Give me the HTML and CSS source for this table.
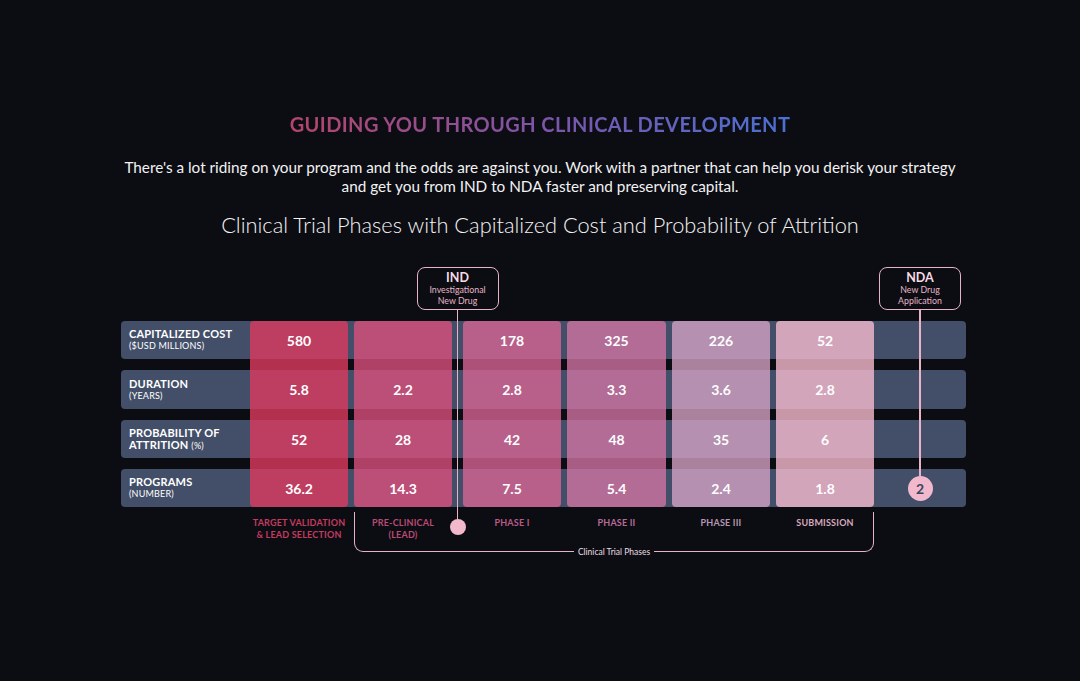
FILE: index.html
```html
<!DOCTYPE html>
<html lang="en">
<head>
<meta charset="utf-8">
<title>Clinical Development</title>
<link rel="stylesheet" href="styles.css">
</head>
<body>
<main class="page">
  <h1 class="title">GUIDING YOU THROUGH CLINICAL DEVELOPMENT</h1>
  <p class="intro">There's a lot riding on your program and the odds are against you. Work with a partner that can help you derisk your strategy<br>and get you from IND to NDA faster and preserving capital.</p>
  <h2 class="subtitle">Clinical Trial Phases with Capitalized Cost and Probability of Attrition</h2>

  <div class="chart">
    <div class="callout callout-ind"><strong>IND</strong><span>Investigational<br>New Drug</span></div>
    <div class="callout callout-nda"><strong>NDA</strong><span>New Drug<br>Application</span></div>

    <div class="bar r1"></div>
    <div class="bar r2"></div>
    <div class="bar r3"></div>
    <div class="bar r4"></div>

    <div class="col c1"></div>
    <div class="col c2"></div>
    <div class="col c3"></div>
    <div class="col c4"></div>
    <div class="col c5"></div>
    <div class="col c6"></div>

    <div class="rowlabel r1"><b>CAPITALIZED COST</b><small>($USD MILLIONS)</small></div>
    <div class="rowlabel r2"><b>DURATION</b><small>(YEARS)</small></div>
    <div class="rowlabel r3"><b>PROBABILITY OF</b><b>ATTRITION <small class="inl">(%)</small></b></div>
    <div class="rowlabel r4"><b>PROGRAMS</b><small>(NUMBER)</small></div>

    <div class="val r1 k1">580</div>
    <div class="val r1 k3">178</div>
    <div class="val r1 k4">325</div>
    <div class="val r1 k5">226</div>
    <div class="val r1 k6">52</div>

    <div class="val r2 k1">5.8</div>
    <div class="val r2 k2">2.2</div>
    <div class="val r2 k3">2.8</div>
    <div class="val r2 k4">3.3</div>
    <div class="val r2 k5">3.6</div>
    <div class="val r2 k6">2.8</div>

    <div class="val r3 k1">52</div>
    <div class="val r3 k2">28</div>
    <div class="val r3 k3">42</div>
    <div class="val r3 k4">48</div>
    <div class="val r3 k5">35</div>
    <div class="val r3 k6">6</div>

    <div class="val r4 k1">36.2</div>
    <div class="val r4 k2">14.3</div>
    <div class="val r4 k3">7.5</div>
    <div class="val r4 k4">5.4</div>
    <div class="val r4 k5">2.4</div>
    <div class="val r4 k6">1.8</div>

    <div class="bracket"><span>Clinical Trial Phases</span></div>

    <div class="phase k1 t1">TARGET VALIDATION<br>&amp; LEAD SELECTION</div>
    <div class="phase k2 t2">PRE-CLINICAL<br>(LEAD)</div>
    <div class="phase k3 t3">PHASE I</div>
    <div class="phase k4 t4">PHASE II</div>
    <div class="phase k5 t5">PHASE III</div>
    <div class="phase k6 t6">SUBMISSION</div>

    <div class="conn conn-ind"><i class="stem"></i><i class="dot"></i></div>
    <div class="conn conn-nda"><i class="stem"></i><i class="dot dot-num">2</i></div>
  </div>
</main>
</body>
</html>
```

FILE: styles.css
```css
* { box-sizing: border-box; }
html, body { margin: 0; padding: 0; }
body {
  background: #0c0d12;
  color: #f2f2f4;
  font-family: Lato, "Open Sans", sans-serif;
  width: 1080px;
  height: 681px;
  overflow: hidden;
}
.page {
  padding-top: 112px;
  text-align: center;
}
.title {
  display: inline-block;
  margin: 0;
  font-size: 20px;
  line-height: 24px;
  font-weight: 700;
  letter-spacing: 0.4px;
  background: linear-gradient(90deg, #b4456b 0%, #7d55a8 50%, #4b70d2 100%);
  -webkit-background-clip: text;
  background-clip: text;
  color: transparent;
}
.intro {
  margin: 22px 0 0;
  font-size: 15.3px;
  line-height: 19px;
  font-weight: 400;
  color: #f2f2f4;
}
.subtitle {
  margin: 15px 0 0;
  font-size: 21.8px;
  line-height: 27px;
  font-weight: 300;
  color: #f4f4f6;
}

/* chart grid */
.chart {
  margin: 29px 0 0 121px;
  display: grid;
  grid-template-columns: 129px 98px 6px 98px 11px 98px 6px 99px 6px 98px 6px 98px 92px;
  grid-template-rows: 43px 11px 38px 11px 39px 11px 38px 11px 38px 50px;
  text-align: left;
}
.bar {
  grid-column: 1 / -1;
  background: #434f68;
  border-radius: 4px;
}
.r1 { grid-row: 3; }
.r2 { grid-row: 5; }
.r3 { grid-row: 7; }
.r4 { grid-row: 9; }
.k1 { grid-column: 2; }
.k2 { grid-column: 4; }
.k3 { grid-column: 6; }
.k4 { grid-column: 8; }
.k5 { grid-column: 10; }
.k6 { grid-column: 12; }

.col {
  grid-row: 3 / 10;
  border-radius: 4px;
  opacity: 0.8;
  z-index: 1;
}
.col.c1 { grid-column: 2; background: #dd3a5f; }
.col.c2 { grid-column: 4; background: #d94f7c; }
.col.c3 { grid-column: 6; background: #d66392; }
.col.c4 { grid-column: 8; background: #d073a1; }
.col.c5 { grid-column: 10; background: #d2a0c2; }
.col.c6 { grid-column: 12; background: #f7bace; }

.rowlabel {
  grid-column: 1;
  z-index: 2;
  padding-left: 8px;
  display: flex;
  flex-direction: column;
  justify-content: center;
  color: #ffffff;
  line-height: 12px;
}
.rowlabel b {
  font-size: 11px;
  font-weight: 700;
  letter-spacing: 0.2px;
}
.rowlabel small {
  font-size: 9px;
  font-weight: 400;
  letter-spacing: 0.2px;
}
.rowlabel small.inl { font-size: 9px; }

.val {
  z-index: 2;
  display: flex;
  align-items: center;
  justify-content: center;
  font-size: 14px;
  font-weight: 700;
  color: #ffffff;
}

.phase {
  grid-row: 10;
  z-index: 2;
  padding-top: 10px;
  text-align: center;
  font-size: 9px;
  line-height: 12px;
  font-weight: 700;
  letter-spacing: 0.2px;
}
.t1 { color: #c43b60; }
.t2 { color: #bb4a74; }
.t3 { color: #bb5a87; }
.t4 { color: #b76c97; }
.t5 { color: #b797b5; }
.t6 { color: #d6a9bd; }

.bracket {
  grid-row: 10;
  grid-column: 4 / 13;
  margin-top: 5px;
  height: 40px;
  border: 1.5px solid #e8b3c7;
  border-top: none;
  border-radius: 0 0 9px 9px;
  display: flex;
  justify-content: center;
  align-items: flex-end;
}
.bracket span {
  background: #0c0d12;
  padding: 0 4px;
  font-size: 8.5px;
  line-height: 10px;
  margin-bottom: -5.5px;
  color: #eadde3;
}

.callout {
  grid-row: 1;
  justify-self: center;
  width: 82px;
  height: 43px;
  border: 1.5px solid #e8b3c7;
  border-radius: 8px;
  background: #0c0d12;
  display: flex;
  flex-direction: column;
  align-items: center;
  justify-content: center;
  text-align: center;
  z-index: 3;
}
.callout-ind { grid-column: 4 / 7; }
.callout-nda { grid-column: 13; }
.callout strong {
  font-size: 12.5px;
  line-height: 14px;
  font-weight: 700;
  color: #f6dbe6;
}
.callout span {
  font-size: 8.8px;
  line-height: 10.5px;
  color: #e6b6c8;
}

.conn {
  z-index: 3;
  display: flex;
  flex-direction: column;
  align-items: center;
  justify-self: center;
}
.conn-ind { grid-column: 5; grid-row: 2 / 11; }
.conn-nda { grid-column: 13; grid-row: 2 / 10; }
.stem {
  display: block;
  width: 1.5px;
  background: #e8b3c7;
}
.conn-ind .stem { height: 209px; }
.conn-nda .stem { flex: 1; }
.dot {
  display: block;
  width: 16px;
  height: 16px;
  border-radius: 50%;
  background: #f2b9cd;
  flex: none;
}
.dot-num {
  width: 25px;
  height: 25px;
  margin-bottom: 6px;
  font-style: normal;
  font-size: 14px;
  font-weight: 700;
  color: #3a4560;
  display: flex;
  align-items: center;
  justify-content: center;
}
```
